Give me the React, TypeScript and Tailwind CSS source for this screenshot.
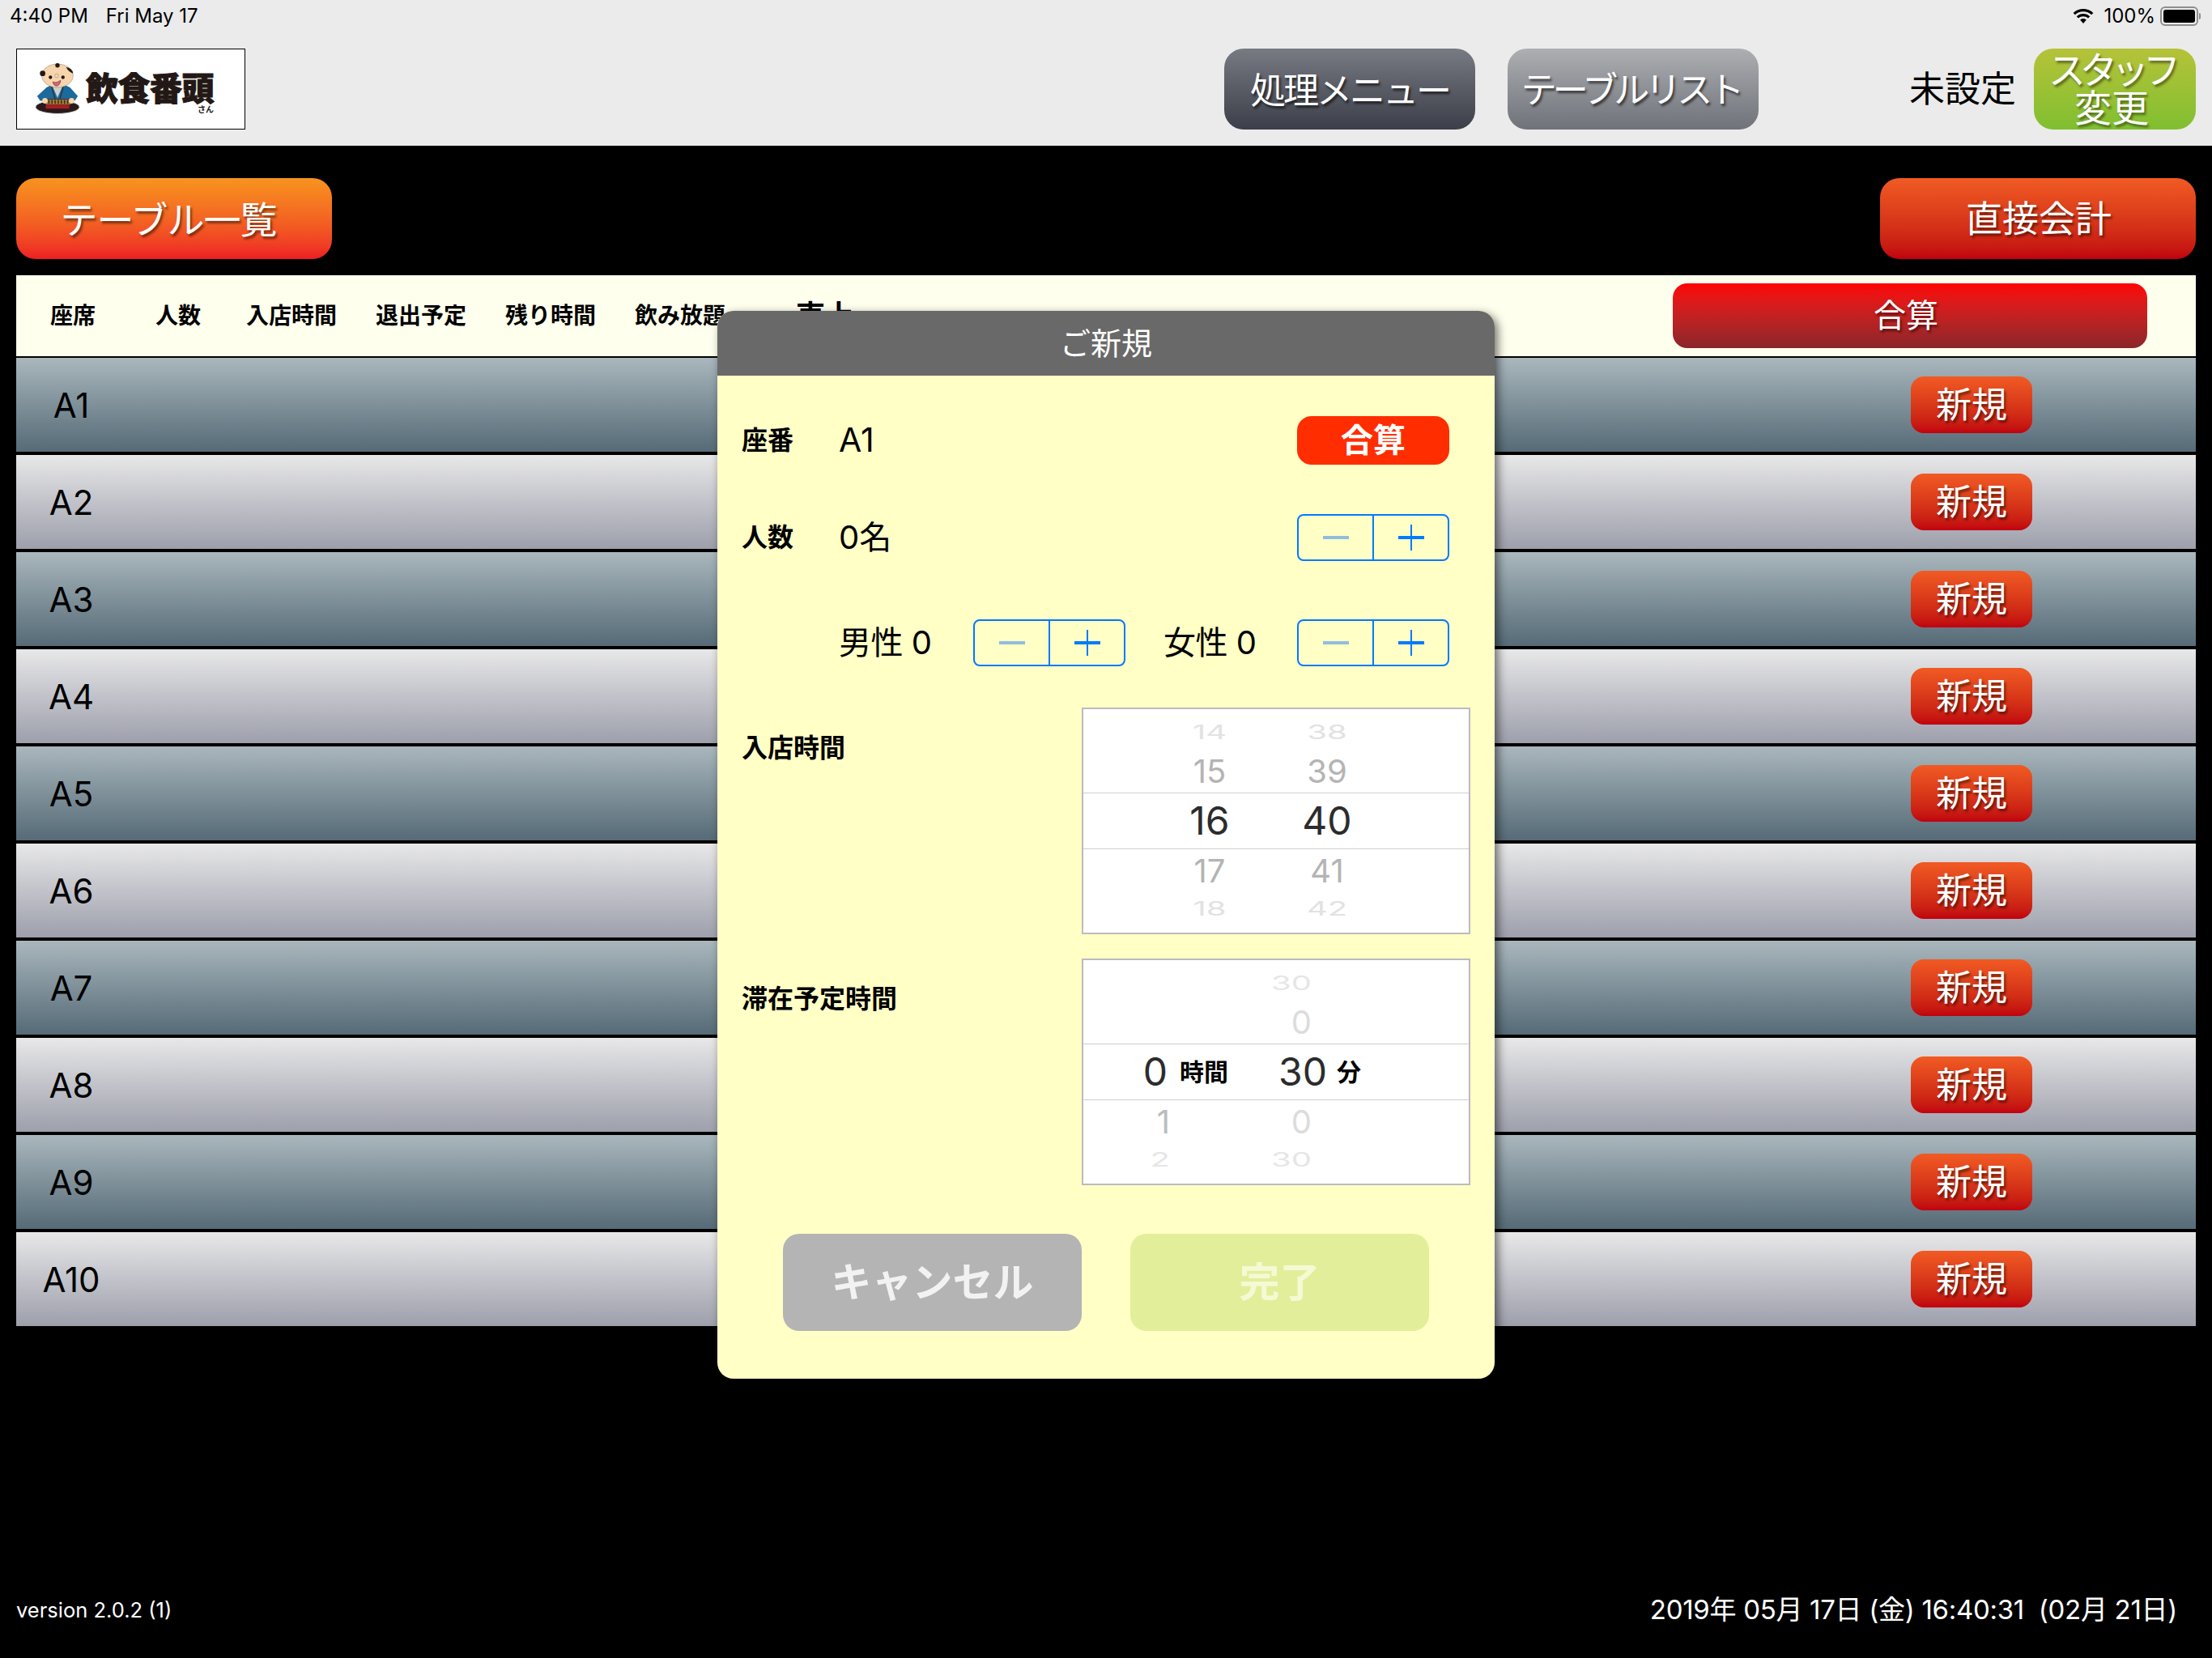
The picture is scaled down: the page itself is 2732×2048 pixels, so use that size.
const font = "font-['Inter','Noto_Sans_CJK_JP',sans-serif]";

const rows = ['A1', 'A2', 'A3', 'A4', 'A5', 'A6', 'A7', 'A8', 'A9', 'A10'];
const columns = [
  { label: '座席', cls: 'w-[130px]' },
  { label: '人数', cls: 'w-[112px]' },
  { label: '入店時間', cls: 'w-[160px]' },
  { label: '退出予定', cls: 'w-[160px]' },
  { label: '残り時間', cls: 'w-[160px]' },
  { label: '飲み放題', cls: 'w-[199px]' },
];

function Wifi() {
  return (
    <svg width="28" height="20" viewBox="0 0 28 20" fill="#000">
      <path d="M14 4.200c3.900 0 7.400 1.500 10.100 4L26.400 6C23.100 2.800 18.800 1 14 1S4.900 2.800 1.600 6l2.300 2.200C6.600 5.700 10.100 4.200 14 4.200z" />
      <path d="M14 10.200c2.300 0 4.400.9 6 2.300l2.300-2.200C20.100 8.200 17.200 7 14 7s-6.100 1.200-8.300 3.300L8 12.500c1.600-1.400 3.700-2.300 6-2.300z" />
      <path d="M14 13c-1.500 0-2.900.6-3.900 1.500L14 19l3.900-4.500C16.900 13.600 15.500 13 14 13z" />
    </svg>
  );
}

function Battery() {
  return (
    <div className="flex items-center gap-[1px]">
      <div className="w-[47px] h-[24px] rounded-[6px] border-2 border-[#8e8e8e] p-[2px]">
        <div className="w-full h-full rounded-[3px] bg-black" />
      </div>
      <div className="w-[2px] h-[8px] rounded-r-sm bg-[#8e8e8e]" />
    </div>
  );
}

// logo mascot: seated banto with abacus
function Mascot() {
  return (
    <svg width="58" height="64" viewBox="0 0 60 66">
      <ellipse cx="30" cy="56" rx="28" ry="8.500" fill="#2a1a1c" stroke="#ddd" strokeWidth="1" />
      <path d="M4 42 L16 31 L24 27 L38 27 L46 31 L56 42 L52 48 L8 48 Z" fill="#1c6a9c" />
      <path d="M23 28 L30 44 L37 28 Z" fill="#cfcfcf" />
      <path d="M22 28 L27 46 M38 28 L33 46" stroke="#333" strokeWidth="1.500" fill="none" />
      <ellipse cx="30" cy="16" rx="20" ry="15" fill="#f8d4ac" stroke="#777" strokeWidth="0.500" />
      <circle cx="11" cy="13" r="3.500" fill="#231815" />
      <circle cx="30" cy="2.800" r="2.800" fill="#231815" />
      <path d="M41 5 q8 1 9 8 q-6 -2 -9 -8z" fill="#231815" />
      <circle cx="21" cy="18" r="2.200" fill="#231815" />
      <circle cx="37" cy="18" r="2.200" fill="#231815" />
      <circle cx="29" cy="16" r="2.500" fill="none" stroke="#999" strokeWidth="0.700" />
      <path d="M24 24 q5 2 10 -2 q-1 7 -5 7 q-4 0 -5 -5z" fill="#e0607a" stroke="#231815" strokeWidth="0.500" />
      <rect x="15" y="46" width="32" height="7" fill="#a07a3c" stroke="#3b2a18" strokeWidth="0.800" />
      <path d="M19 47v5M23 47v5M27 47v5M31 47v5M35 47v5M39 47v5M43 47v5" stroke="#3b2a18" strokeWidth="1.500" />
      <rect x="15" y="53" width="30" height="5" fill="#a51e22" />
      <circle cx="14" cy="48" r="3.500" fill="#f8d4ac" />
      <circle cx="48" cy="48" r="3.500" fill="#f8d4ac" />
    </svg>
  );
}

function Stepper() {
  return (
    <div className="flex w-[188px] h-[58px] rounded-[8px] border-2 border-[#007aff]">
      <div className="flex-1 flex items-center justify-center">
        <div className="w-[32px] h-[4px] bg-[#8fbddf]" />
      </div>
      <div className="w-[2px] bg-[#007aff]" />
      <div className="flex-1 flex items-center justify-center relative">
        <div className="w-[32px] h-[4px] bg-[#007aff]" />
        <div className="absolute w-[2px] h-[32px] bg-[#007aff]" />
      </div>
    </div>
  );
}

function WheelRow({ a, b, near }: { a: string; b: string; near?: boolean }) {
  const tone = near ? 'h-[36px] text-[40px] text-[#b4b4b4]' : 'h-[24px] text-[40px] text-[#e2e2e2] scale-y-[0.6]';
  return (
    <div className={`flex pl-[116px] gap-[65px] items-center leading-none ${tone}`}>
      <span className="w-[80px] text-center">{a}</span>
      <span className="w-[80px] text-center">{b}</span>
    </div>
  );
}

function DurationRow({ a, b, near }: { a?: string; b: string; near?: boolean }) {
  const tone = near ? 'h-[36px] text-[40px]' : 'h-[24px] text-[40px] scale-y-[0.6] text-[#e6e6e6]';
  return (
    <div className={`flex items-center leading-none ${tone}`}>
      <span className={`w-[107px] text-right ${near ? 'text-[#bcbcbc]' : 'text-[#e6e6e6]'}`}>{a}</span>
      <span className={`w-[175px] text-right ${near ? 'text-[#dcdcdc]' : 'text-[#e6e6e6]'}`}>{b}</span>
    </div>
  );
}

export default function App() {
  return (
    <div className={`relative w-[2732px] h-[2048px] bg-black flex flex-col overflow-hidden ${font}`}>
      {/* top bar */}
      <header className="h-[180px] bg-[#ebebeb] shrink-0 flex flex-col">
        <div className="h-[40px] pl-[12px] pr-[13px] flex items-center justify-between text-[24px] text-black leading-none">
          <div className="flex gap-[22px]">
            <span>4:40 PM</span>
            <span>Fri May 17</span>
          </div>
          <div className="flex items-center pr-[1px]">
            <Wifi />
            <span className="ml-[11px] mr-[6px]">100%</span>
            <Battery />
          </div>
        </div>
        <div className="mt-[20px] h-[100px] pl-[20px] pr-[20px] flex items-center">
          <div className="w-[283px] h-[100px] bg-white border border-black flex items-center pl-[21px]">
            <Mascot />
            <div className="ml-[6px] pt-[10px] flex flex-col items-end">
              <span className="text-[40px] leading-[40px] font-black text-[#231815] tracking-[-0.5px] whitespace-nowrap [-webkit-text-stroke:1px_#231815]">飲食番頭</span>
              <span className="text-[10px] leading-[10px] font-bold text-[#231815]">さん</span>
            </div>
          </div>
          <button className="ml-[1209px] w-[310px] h-[100px] pt-[3px] rounded-[24px] bg-gradient-to-b from-[#787b82] to-[#3c3e49] text-white text-[44px] tracking-[-3px] [text-shadow:2px_3px_3px_rgba(0,0,0,0.6)]">処理メニュー</button>
          <button className="ml-[40px] w-[310px] h-[100px] pr-[6px] pt-[1px] rounded-[24px] bg-gradient-to-b from-[#adafb2] to-[#6f7279] text-white text-[44px] tracking-[-5px] [text-shadow:2px_3px_3px_rgba(0,0,0,0.6)]">テーブルリスト</button>
          <span className="ml-auto text-[44px] text-black leading-none">未設定</span>
          <button className="ml-[22px] w-[200px] h-[100px] pr-[8px] rounded-[24px] bg-gradient-to-b from-[#b5c239] to-[#7fbf30] text-white text-[46px] leading-[47px] [text-shadow:2px_3px_3px_rgba(0,0,0,0.45)]">
            <span className="block tracking-[-7px]">スタッフ</span>
            <span className="block">変更</span>
          </button>
        </div>
      </header>

      {/* action row */}
      <div className="mt-[40px] px-[20px] flex justify-between">
        <button className="w-[390px] h-[100px] pr-[14px] pt-[2px] rounded-[24px] bg-gradient-to-b from-[#f7931e] to-[#ed1c24] text-white text-[46px] tracking-[-1px] [text-shadow:2px_3px_3px_rgba(0,0,0,0.5)]">テーブル一覧</button>
        <button className="w-[390px] h-[100px] pt-[2px] pl-[2px] rounded-[24px] bg-gradient-to-b from-[#f15a24] to-[#c1000f] text-white text-[45px] [text-shadow:2px_3px_3px_rgba(0,0,0,0.5)]">直接会計</button>
      </div>

      {/* table */}
      <div className="mt-[20px] mx-[20px] flex flex-col gap-[4px]">
        <div className="h-[102px] border-b-[2px] border-black -mb-[4px] bg-[#ffffee] flex items-center pl-[42px] pr-[60px]">
          {columns.map(c => (
            <span key={c.label} className={`${c.cls} shrink-0 text-[28px] font-bold text-black`}>{c.label}</span>
          ))}
          <span className="text-[36px] font-bold text-black">売上</span>
          <button className="ml-auto w-[586px] h-[80px] pr-[10px] rounded-[18px] bg-gradient-to-b from-[#ff0000] to-[#8b2529] text-white text-[40px] [text-shadow:2px_3px_3px_rgba(0,0,0,0.5)]">合算</button>
        </div>
        {rows.map((r, i) => (
          <div key={r} className={`h-[116px] shrink-0 flex items-center justify-between pl-[10px] pr-[202px] ${i % 2 === 0 ? 'bg-gradient-to-b from-[#aab7bd] to-[#566b77]' : 'bg-gradient-to-b from-[#e8e8e9] to-[#9d9fab]'}`}>
            <span className="w-[116px] pt-[2px] text-center text-[42px] text-black leading-none">{r}</span>
            <button className="w-[150px] h-[70px] rounded-[16px] bg-gradient-to-b from-[#f15a24] to-[#c1000f] text-white text-[44px] [text-shadow:2px_3px_3px_rgba(0,0,0,0.5)]">新規</button>
          </div>
        ))}
      </div>

      {/* footer */}
      <footer className="mt-auto h-[120px] px-[20px] pr-[43px] flex items-start justify-between text-white">
        <span className="pt-[43px] text-[25.500px] leading-[36px]">version 2.0.2 (1)</span>
        <span className="pt-[40px] text-[33px] leading-[40px] tracking-[-0.3px] whitespace-pre">2019年 05月 17日 (金) 16:40:31  (02月 21日)</span>
      </footer>

      {/* new-guest modal */}
      <div className="absolute left-[886px] top-[384px] w-[960px] h-[1319px] rounded-[20px] bg-[#ffffc6] overflow-hidden shadow-[4px_4px_12px_rgba(0,0,0,0.55)] flex flex-col text-black">
        <div className="h-[80px] bg-[#696969] flex items-center justify-center text-white text-[38px] shrink-0">ご新規</div>

        <div className="mt-[50px] h-[60px] flex items-center pl-[30px] pr-[56px]">
          <span className="w-[120px] text-[32px] font-bold">座番</span>
          <span className="text-[41px]">A1</span>
          <div className="ml-auto w-[188px] h-[60px] rounded-[18px] bg-[#ff2d00] text-white font-bold text-[40px] flex items-center justify-center">合算</div>
        </div>

        <div className="mt-[61px] h-[58px] flex items-center pl-[30px] pr-[56px]">
          <span className="w-[120px] text-[32px] font-bold">人数</span>
          <span className="text-[40px]">0名</span>
          <div className="ml-auto"><Stepper /></div>
        </div>

        <div className="mt-[72px] h-[58px] flex items-center pl-[150px] pr-[56px]">
          <span className="w-[166px] text-[40px] tracking-[-0.5px]">男性 0</span>
          <Stepper />
          <span className="ml-[47px] text-[40px] tracking-[-0.5px]">女性 0</span>
          <div className="ml-auto"><Stepper /></div>
        </div>

        <div className="mt-[51px] h-[280px] flex pl-[30px] pr-[30px] justify-between">
          <span className="pt-[27px] text-[32px] leading-[46px] font-bold">入店時間</span>
          <div className="w-[480px] h-[280px] bg-white border-2 border-[#bbbbbf] flex flex-col">
            <div className="h-[103px] flex flex-col pt-[17px] gap-[18px]">
              <WheelRow a="14" b="38" />
              <WheelRow a="15" b="39" near />
            </div>
            <div className="h-[70px] border-y border-[#cfcfd1] flex items-center pl-[116px] gap-[65px] text-[48px] text-[#2c2c2c] leading-none">
              <span className="w-[80px] text-center">16</span>
              <span className="w-[80px] text-center">40</span>
            </div>
            <div className="flex flex-col pt-[9px] gap-[17px]">
              <WheelRow a="17" b="41" near />
              <WheelRow a="18" b="42" />
            </div>
          </div>
        </div>

        <div className="mt-[30px] h-[280px] flex pl-[30px] pr-[30px] justify-between">
          <span className="pt-[27px] text-[32px] leading-[46px] font-bold">滞在予定時間</span>
          <div className="w-[480px] h-[280px] bg-white border-2 border-[#bbbbbf] flex flex-col">
            <div className="h-[103px] flex flex-col pt-[17px] gap-[18px]">
              <DurationRow b="30" />
              <DurationRow b="0" near />
            </div>
            <div className="h-[70px] border-y border-[#cfcfd1] flex items-center text-[48px] text-[#2c2c2c] leading-none">
              <span className="w-[104px] text-right">0</span>
              <span className="ml-[15px] text-[30px] font-bold text-black">時間</span>
              <span className="ml-[62px]">30</span>
              <span className="ml-[12px] text-[30px] font-bold text-black">分</span>
            </div>
            <div className="flex flex-col pt-[9px] gap-[17px]">
              <DurationRow a="1" b="0" near />
              <DurationRow a="2" b="30" />
            </div>
          </div>
        </div>

        <div className="mt-[60px] flex justify-center gap-[60px]">
          <div className="w-[369px] h-[120px] rounded-[20px] bg-[#b4b4b4] text-[#f2f2f2] text-[50px] font-bold flex items-center justify-center">キャンセル</div>
          <div className="w-[369px] h-[120px] rounded-[20px] bg-[#e3ee9b] text-[#f6f9d4] text-[50px] font-bold flex items-center justify-center">完了</div>
        </div>
      </div>
    </div>
  );
}
